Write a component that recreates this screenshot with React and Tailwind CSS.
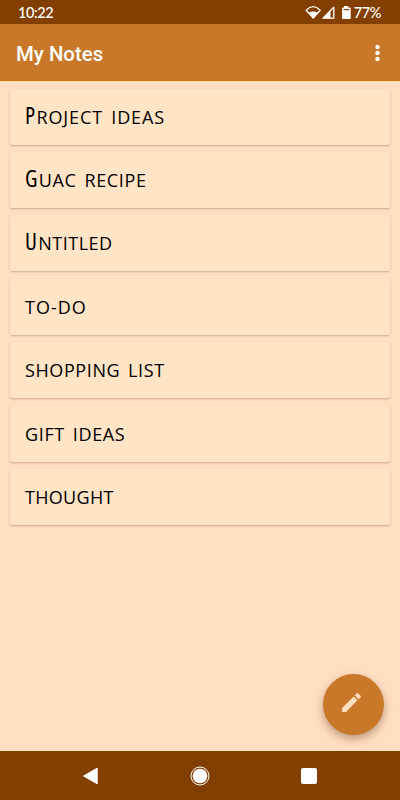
const notes = [
  { title: 'Project ideas', style: 'mb-[1px] tracking-[0.920px] [word-spacing:2.500px] first-letter:text-[23px] first-letter:[font-stretch:75%] first-letter:tracking-[1.300px]' },
  { title: 'Guac recipe', style: 'mb-[1px] tracking-[0.650px] [word-spacing:2.500px] first-letter:text-[23px] first-letter:[font-stretch:75%] first-letter:tracking-[1.300px]' },
  { title: 'Untitled', style: 'mb-[2px] tracking-[0.5px] first-letter:text-[23px] first-letter:[font-stretch:75%] first-letter:tracking-[1.300px]' },
  { title: 'to-do', style: 'tracking-[1px]' },
  { title: 'shopping list', style: 'tracking-[0.600px] [word-spacing:2.500px]' },
  { title: 'gift ideas', style: 'tracking-[0.650px] [word-spacing:2.500px]' },
  { title: 'thought', style: 'tracking-[0.300px]' },
]

function StatusBar() {
  return (
    <div className="h-6 shrink-0 bg-[#823f00] flex items-center pl-[18px] pr-[19px] text-white font-['Lato',sans-serif] text-[14.5px] font-medium">
      <span className="tracking-[-0.400px] mt-[2px]">10:22</span>
      <svg className="ml-auto mt-[1px]" width="48" height="16" viewBox="0 0 48 16" fill="none">
        {/* wifi */}
        <path d="M1.200 5.200Q8.200-1.800 15.200 5.200L8.200 13Z" stroke="white" strokeWidth="1.300" strokeLinejoin="round" />
        <path d="M3.800 7.800Q8.200 5 12.600 7.800L8.200 13.200Z" fill="white" />
        {/* signal */}
        <path d="M18 13.200 28.800 2.200V13.200Z" stroke="white" strokeWidth="1.300" strokeLinejoin="round" />
        <path d="M18 13.500 25.500 5.500V13.500Z" fill="white" />
        {/* battery */}
        <path d="M39 1h4.200v1.500h1.700q.8 0 .8.800v9.900q0 .8-.8.800h-7q-.8 0-.8-.8v-9.900q0-.8.800-.8h1.100z" fill="white" />
        <path d="M38.500 4.600h5.800" stroke="#823f00" strokeWidth="1.200" />
      </svg>
      <span className="ml-[1px] mt-[2px] tracking-[-0.4px]">77%</span>
    </div>
  )
}

function Header() {
  return (
    <div className="h-[57px] shrink-0 bg-[#c87828] border-b border-[#d27308] flex items-center justify-between pl-4 pr-[20px]">
      <h1 className="text-white font-['Roboto',sans-serif] font-medium text-[20.400px] leading-6 mt-[3px]">My Notes</h1>
      <svg className="mt-[2px]" width="5" height="18" viewBox="0 0 5 18" fill="white">
        <circle cx="2.500" cy="3" r="2.200" />
        <circle cx="2.500" cy="9" r="2.200" />
        <circle cx="2.500" cy="15" r="2.200" />
      </svg>
    </div>
  )
}

function NavBar() {
  return (
    <div className="h-[49px] shrink-0 bg-[#823f00] flex items-center pl-[82px] pr-[83px] justify-between">
      <svg width="17" height="18" viewBox="0 0 17 18">
        <path d="M1.500 9 15.200 1.200V16.800Z" fill="white" stroke="white" strokeLinejoin="round" />
      </svg>
      <svg width="20" height="20" viewBox="0 0 20 20">
        <circle cx="10" cy="10" r="9" fill="none" stroke="white" strokeWidth="1" />
        <circle cx="10" cy="10" r="7.300" fill="white" />
      </svg>
      <div className="w-4 h-4 rounded-[2px] bg-white" />
    </div>
  )
}

export default function App() {
  return (
    <div className="relative w-[400px] h-[800px] flex flex-col bg-[#ffdec2] overflow-hidden">
      <StatusBar />
      <Header />

      <div className="flex-1 flex flex-col gap-[7.400px] px-[10px] pt-[7.600px]">
        {notes.map((note) => (
          <div
            key={note.title}
            className="h-[56px] shrink-0 rounded-[2px] bg-[#ffe4c6] shadow-[0_1px_2px_rgba(110,60,20,0.32)] pl-[15px] flex items-center"
          >
            <p className={`text-black uppercase whitespace-nowrap font-['Open_Sans',sans-serif] text-[18px] leading-[30px] ${note.style}`}>
              {note.title}
            </p>
          </div>
        ))}
      </div>

      {/* new note button */}
      <button className="absolute right-[16px] bottom-[65px] w-[61px] h-[61px] rounded-full bg-[#c87828] shadow-[0_4px_8px_rgba(90,50,20,0.4)] flex items-center justify-center">
        <svg className="mr-[5px] mb-[5px]" width="25" height="25" viewBox="0 0 24 24" fill="#ffdec2">
          <path d="M3 17.250V21h3.750L17.810 9.940l-3.750-3.750L3 17.250zM20.710 7.040a1 1 0 0 0 0-1.410l-2.340-2.340a1 1 0 0 0-1.410 0l-1.830 1.830 3.750 3.750 1.830-1.830z" />
        </svg>
      </button>

      <NavBar />
    </div>
  )
}
